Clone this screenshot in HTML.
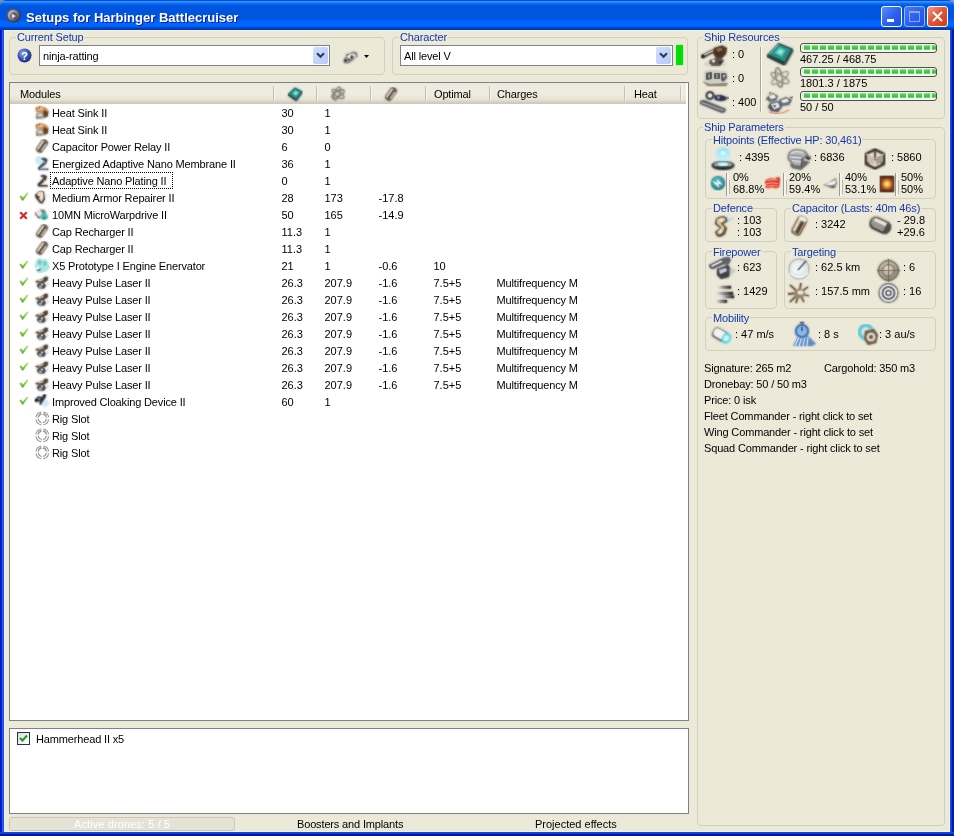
<!DOCTYPE html><html><head><meta charset="utf-8"><style>
*{margin:0;padding:0;box-sizing:border-box}
html,body{width:954px;height:836px;overflow:hidden;background:#0831D9}
body{position:relative;font-family:"Liberation Sans",sans-serif;font-size:11px;color:#000}
.a{position:absolute}
.t{position:absolute;white-space:nowrap;line-height:13px;letter-spacing:-0.15px}
#title{left:0;top:0;width:954px;height:30px;border-radius:6px 6px 0 0;background:linear-gradient(#0050D0 0px,#0050D0 1px,#3A93FF 1px,#2E8CFF 2px,#1277FA 3px,#0668F0 4px,#015EE5 5px,#0055DE 6px,#0055E0 19px,#005EF2 20px,#0066FF 22px,#0066FF 26px,#0058EC 27px,#0040C0 28px,#0036B0 30px)}
#body{left:4px;top:30px;width:946px;height:802px;background:#ECE9D8}
.gb{position:absolute;border:1px solid #D0D0BF;border-radius:4px}
.cap{position:absolute;white-space:nowrap;line-height:13px;color:#1438B0;background:#ECE9D8;padding:0 1px;letter-spacing:-0.15px}
.combo{position:absolute;background:#fff;border:1px solid #788390}
.ddb{position:absolute;border-radius:2px;background:linear-gradient(135deg,#D2DEFC,#C0D2FA 60%,#B8CCF8)}
.list{position:absolute;background:#fff;border:1px solid #788390}
.hdr{position:absolute;height:21px;background:linear-gradient(#EBEADB 0,#EEEDE2 50%,#E5E3D3 80%,#D6D2C2 90%,#CBC7B8 100%)}
.sep{position:absolute;width:1px;height:15px;background:#C4C1B0;box-shadow:1px 0 0 #F4F3EC}
.tb{position:absolute;width:21px;height:21px;border:1px solid #fff;border-radius:3px}
</style></head><body><div id="root" style="position:absolute;left:0;top:0;width:954px;height:836px;overflow:hidden;will-change:transform">
<svg width="0" height="0" style="position:absolute"><defs><filter id="bl" x="-20%" y="-20%" width="140%" height="140%"><feGaussianBlur in="SourceGraphic" stdDeviation="0.8" result="b"/><feComponentTransfer in="SourceGraphic" result="s"><feFuncA type="linear" slope="0.55"/></feComponentTransfer><feMerge><feMergeNode in="b"/><feMergeNode in="s"/></feMerge></filter></defs></svg>
<div class="a" style="left:0;top:0;width:8px;height:8px;background:#7E8A9E"></div><div class="a" style="left:946px;top:0;width:8px;height:8px;background:#8494B4"></div>
<div id="title" class="a"></div>
<div class="a" style="left:0;top:30px;width:4px;height:806px;background:linear-gradient(90deg,#0019C8 0,#0019C8 2px,#2A62FF 2px,#2A62FF 3px,#1C50D8 3px)"></div>
<div class="a" style="left:950px;top:30px;width:4px;height:806px;background:linear-gradient(90deg,#2050D8 0,#2050D8 1px,#0A3CE0 1px,#0A3CE0 2px,#0018A0 2px)"></div>
<div class="a" style="left:0;top:832px;width:954px;height:4px;background:linear-gradient(#1848D0 0,#1848D0 1px,#0840E0 1px,#0840E0 2px,#0018A0 2px)"></div>
<div id="body" class="a"></div>
<div class="a" style="left:4px;top:30px;width:946px;height:1px;background:#F6F6F0"></div>
<div class="a" style="left:4px;top:30px;width:1px;height:802px;background:#EEF2FC"></div>
<div class="a" style="left:949px;top:30px;width:1px;height:802px;background:#F2F4FC"></div>
<div class="a" style="left:4px;top:831px;width:946px;height:1px;background:#F2F4FC"></div>
<svg class="a" style="left:6px;top:8px" width="15" height="15" viewBox="0 0 15 15"><defs><linearGradient id="ti" x1="0" y1="0" x2="1" y2="1"><stop offset="0" stop-color="#f0e8e0"/><stop offset="0.5" stop-color="#9a8a80"/><stop offset="1" stop-color="#3a3030"/></linearGradient></defs><g filter="url(#bl)"><circle cx="7.5" cy="7.5" r="6.8" fill="#2a2630"/><circle cx="7.5" cy="7.5" r="5.8" fill="url(#ti)"/><circle cx="7.5" cy="7.8" r="3.2" fill="#1c3070"/><path d="M5.5 5.5 L10 8 L6 10.5Z" fill="#f4f4ff"/></g></svg>
<div class="t" style="left:26px;top:11px;font-size:13px;font-weight:bold;color:#fff;letter-spacing:0;text-shadow:1px 1px 0 #0A1E99">Setups for Harbinger Battlecruiser</div>
<div class="tb" style="left:881px;top:6px;background:linear-gradient(135deg,#5B8CF9,#2C62F0 50%,#1E4FE0)"><div class="a" style="left:5px;top:12px;width:7px;height:3px;background:#fff"></div></div>
<div class="tb" style="left:904px;top:6px;border-color:#9DB5F5;background:linear-gradient(135deg,#4B7CF5,#2C62F0 50%,#1E4FE0)"><div class="a" style="left:4px;top:4px;width:11px;height:11px;border:1px solid #8AA8F0;border-top-width:2px"></div></div>
<div class="tb" style="left:927px;top:6px;background:linear-gradient(135deg,#F09A80,#E2583A 45%,#CC3C1A)"><svg class="a" style="left:3px;top:3px" width="13" height="13"><path d="M2 2L11 11M11 2L2 11" stroke="#fff" stroke-width="2"/></svg></div>
<div class="gb" style="left:9px;top:37px;width:376px;height:38px"></div>
<div class="cap" style="left:16px;top:31px">Current Setup</div>
<svg class="a" style="left:17px;top:48px" width="15" height="15" viewBox="0 0 15 15"><defs><radialGradient id="hq" cx="40%" cy="35%" r="65%"><stop offset="0" stop-color="#9fb4f0"/><stop offset="0.6" stop-color="#3553b8"/><stop offset="1" stop-color="#1d2f80"/></radialGradient></defs><circle cx="7.5" cy="7.5" r="7" fill="url(#hq)"/><text x="7.5" y="11.5" font-size="11" font-weight="bold" text-anchor="middle" fill="#fff" font-family="Liberation Sans">?</text></svg>
<div class="combo" style="left:39px;top:45px;width:291px;height:21px"></div>
<div class="ddb" style="left:313px;top:47px;width:15px;height:17px"><svg class="a" style="left:3px;top:5px" width="9" height="7"><path d="M1 1.3L4.5 4.8L8 1.3" stroke="#2C3A5E" stroke-width="2.2" fill="none"/></svg></div>
<div class="t" style="left:43px;top:50px;">ninja-ratting</div>
<svg class="a" style="left:342px;top:49px" width="18" height="16" viewBox="0 0 18 16"><g filter="url(#bl)"><path d="M1.5 11 L5 6 L9 3.5 L12 2.5 L14.5 4 L16 7 L13 9 L10 12 L6 14.5 L2 14Z" fill="#8a8a84"/><path d="M5 7 L9 5 L12 5 L14 7 L11 9 L7 10Z" fill="#f4f6f8"/><path d="M9 6 L12 7 L10 10 L8 9Z" fill="#1a2028"/><circle cx="3.5" cy="11.5" r="1.2" fill="#101010"/><circle cx="7" cy="10.5" r="1" fill="#303030"/><path d="M4 6 L7 5.5" stroke="#404040" stroke-width="1"/><path d="M13 5 L15 3.5" stroke="#606060" stroke-width="1"/></g></svg>
<svg class="a" style="left:364px;top:55px" width="6" height="4" viewBox="0 0 6 4"><path d="M0 0H5L2.5 3Z" fill="#000"/></svg>
<div class="gb" style="left:392px;top:37px;width:296px;height:38px"></div>
<div class="cap" style="left:399px;top:31px">Character</div>
<div class="combo" style="left:400px;top:45px;width:273px;height:21px"></div>
<div class="ddb" style="left:656px;top:47px;width:15px;height:17px"><svg class="a" style="left:3px;top:5px" width="9" height="7"><path d="M1 1.3L4.5 4.8L8 1.3" stroke="#2C3A5E" stroke-width="2.2" fill="none"/></svg></div>
<div class="t" style="left:404px;top:50px;">All level V</div>
<div class="a" style="left:676px;top:45px;width:7px;height:20px;background:#00E000;box-shadow:0 0 1px #8f8"></div>
<div class="list" style="left:9px;top:82px;width:680px;height:639px"></div>
<div class="hdr" style="left:10px;top:83px;width:676px"></div>
<div class="sep" style="left:273px;top:86px"></div>
<div class="sep" style="left:316px;top:86px"></div>
<div class="sep" style="left:370px;top:86px"></div>
<div class="sep" style="left:425px;top:86px"></div>
<div class="sep" style="left:489px;top:86px"></div>
<div class="sep" style="left:624px;top:86px"></div>
<div class="sep" style="left:680px;top:86px"></div>
<div class="t" style="left:20px;top:88px;">Modules</div>
<div class="t" style="left:434px;top:88px;">Optimal</div>
<div class="t" style="left:497px;top:88px;">Charges</div>
<div class="t" style="left:634px;top:88px;">Heat</div>
<svg class="a" style="left:287px;top:86px" width="16" height="16" viewBox="0 0 16 16"><g filter="url(#bl)"><path d="M1 8 L8 1.5 L15.5 5.5 L9.5 14Z" fill="#1e5a58"/><path d="M3 8 L8 3 L13.5 6 L9 12Z" fill="#2e9a90"/><path d="M6 7.5 L8.5 5 L11.5 6.5 L9 9.5Z" fill="#80e8d8"/><path d="M1 8 L9.5 14 L9.5 15.5 L1 9.5Z" fill="#203030"/><path d="M9.5 14 L15.5 5.5 L15.5 7 L9.5 15.5Z" fill="#3a4c4c"/></g></svg>
<svg class="a" style="left:330px;top:86px" width="16" height="16" viewBox="0 0 16 16"><g filter="url(#bl)" fill="none" stroke="#7a766c" stroke-width="1.1"><ellipse cx="8" cy="8" rx="7" ry="2.6" transform="rotate(35 8 8)"/><ellipse cx="8" cy="8" rx="7" ry="2.6" transform="rotate(-30 8 8)"/><ellipse cx="7" cy="7.5" rx="2.4" ry="7" transform="rotate(20 7 7.5)"/></g></svg>
<svg class="a" style="left:383px;top:87px" width="16" height="16" viewBox="0 0 16 16"><g filter="url(#bl)" transform="rotate(35 8 7)"><rect x="4.5" y="0" width="7" height="14" rx="3" fill="#3a3028"/><rect x="5.5" y="1" width="5" height="12" rx="2" fill="#a89478"/><rect x="7.3" y="1.5" width="2" height="11" fill="#2a1e12"/><rect x="5.6" y="2" width="1.3" height="10" fill="#f4ece0"/><rect x="9.6" y="3" width="1" height="8" fill="#e8e0d0"/></g></svg>
<svg class="a" style="left:34px;top:105px" width="16" height="16" viewBox="0 0 16 16"><g filter="url(#bl)"><path d="M1.5 3.5 Q4 0.5 8 1.5 L12 3 L15 6.5 L14 9 L9 8 L2.5 7Z" fill="#c78a50"/><path d="M3 3 Q5 1.5 8 2.5 L10 4 L7 5.5 L3.5 5Z" fill="#ecc08a"/><path d="M2.5 3 L3.5 4 M5 2 L6 3.5" stroke="#5a3a20" stroke-width="1.2"/><path d="M10 5 L14 7 L14 11 L10 13 L9 8Z" fill="#5e3e22"/><path d="M2.5 8 L9 8 L10 13 L7 14 L2 13Z" fill="#a09a90"/><path d="M4 9 L8 9 L8 11 L4.5 11Z" fill="#e0dcd6"/><path d="M2 12 L5 13.5 L3 13.8Z" fill="#3a3a38"/></g></svg>
<div class="t" style="left:52px;top:107px;">Heat Sink II</div>
<div class="t" style="left:281.5px;top:107px;letter-spacing:0;">30</div>
<div class="t" style="left:324.5px;top:107px;letter-spacing:0;">1</div>
<svg class="a" style="left:34px;top:122px" width="16" height="16" viewBox="0 0 16 16"><g filter="url(#bl)"><path d="M1.5 3.5 Q4 0.5 8 1.5 L12 3 L15 6.5 L14 9 L9 8 L2.5 7Z" fill="#c78a50"/><path d="M3 3 Q5 1.5 8 2.5 L10 4 L7 5.5 L3.5 5Z" fill="#ecc08a"/><path d="M2.5 3 L3.5 4 M5 2 L6 3.5" stroke="#5a3a20" stroke-width="1.2"/><path d="M10 5 L14 7 L14 11 L10 13 L9 8Z" fill="#5e3e22"/><path d="M2.5 8 L9 8 L10 13 L7 14 L2 13Z" fill="#a09a90"/><path d="M4 9 L8 9 L8 11 L4.5 11Z" fill="#e0dcd6"/><path d="M2 12 L5 13.5 L3 13.8Z" fill="#3a3a38"/></g></svg>
<div class="t" style="left:52px;top:124px;">Heat Sink II</div>
<div class="t" style="left:281.5px;top:124px;letter-spacing:0;">30</div>
<div class="t" style="left:324.5px;top:124px;letter-spacing:0;">1</div>
<svg class="a" style="left:34px;top:139px" width="16" height="16" viewBox="0 0 16 16"><g filter="url(#bl)" transform="rotate(35 8 7)"><rect x="4.5" y="0" width="7" height="14" rx="3" fill="#3a3028"/><rect x="5.5" y="1" width="5" height="12" rx="2" fill="#a89478"/><rect x="7.3" y="1.5" width="2" height="11" fill="#2a1e12"/><rect x="5.6" y="2" width="1.3" height="10" fill="#f4ece0"/><rect x="9.6" y="3" width="1" height="8" fill="#e8e0d0"/></g></svg>
<div class="t" style="left:52px;top:141px;">Capacitor Power Relay II</div>
<div class="t" style="left:281.5px;top:141px;letter-spacing:0;">6</div>
<div class="t" style="left:324.5px;top:141px;letter-spacing:0;">0</div>
<svg class="a" style="left:34px;top:156px" width="16" height="16" viewBox="0 0 16 16"><g filter="url(#bl)"><ellipse cx="5" cy="4" rx="3.5" ry="4" fill="#cfe6f4"/><path d="M7 2.5 Q10 0.8 13.5 3.5 L12 8 L7.5 11 L6 12.5 L14 12.5 L14.5 14 L5 14 L4 12 L9 6.5 L11 4.5 L8 4Z" fill="#2e4050"/><path d="M9 7 L11.5 5 L11 8Z" fill="#8aa0b4"/><path d="M6 13 L13 13" stroke="#a8b8c4" stroke-width="0.8"/></g></svg>
<div class="t" style="left:52px;top:158px;">Energized Adaptive Nano Membrane II</div>
<div class="t" style="left:281.5px;top:158px;letter-spacing:0;">36</div>
<div class="t" style="left:324.5px;top:158px;letter-spacing:0;">1</div>
<svg class="a" style="left:34px;top:173px" width="16" height="16" viewBox="0 0 16 16"><g filter="url(#bl)"><path d="M6.5 3 Q9 0.8 13 3.5 L11.5 7.5 L7.5 10.5 L6 12 L13.5 12 L14 13.5 L4.5 13.5 L3.5 11.5 L8.5 6 L10.5 4.5 L7.5 4Z" fill="#3a2e22"/><path d="M6 5 L8 5.5 L5.5 8Z" fill="#f0e4d8"/><path d="M9 8 L11 6.5 L10.5 9Z" fill="#b8aca0"/></g></svg>
<div class="t" style="left:52px;top:175px;">Adaptive Nano Plating II</div>
<div class="t" style="left:281.5px;top:175px;letter-spacing:0;">0</div>
<div class="t" style="left:324.5px;top:175px;letter-spacing:0;">1</div>
<svg class="a" style="left:19px;top:192px" width="10" height="9" viewBox="0 0 10 9"><defs><linearGradient id="ck" x1="0" y1="0" x2="0" y2="1"><stop offset="0" stop-color="#c4ec7c"/><stop offset="1" stop-color="#52ac2c"/></linearGradient></defs><path d="M0.3 4.6 L2.2 3.3 L3.8 5.5 L8.2 0.2 L9.6 1.3 L4 8.8 L3.3 8.8Z" fill="url(#ck)"/></svg>
<svg class="a" style="left:34px;top:190px" width="16" height="16" viewBox="0 0 16 16"><g filter="url(#bl)"><path d="M4 2 Q7 -0.5 10 2 L11 9 L8.5 13.5 L6 13 L2 8 L1 5Z" fill="#3e3224"/><path d="M4.5 2 Q7 0.5 9 2.5 L9.5 8 L7.5 12 L4 7 L3 4Z" fill="#e8d4b8"/><path d="M1.5 5.5 L5 6 L6 8 L2.5 8Z" fill="#2e241a"/><path d="M7 3 L8.5 3 L8 9 L7 10Z" fill="#fff2e0"/><path d="M11 4 L14 5.5 L12 8Z" fill="#d8f0f0" opacity="0.7"/></g></svg>
<div class="t" style="left:52px;top:192px;">Medium Armor Repairer II</div>
<div class="t" style="left:281.5px;top:192px;letter-spacing:0;">28</div>
<div class="t" style="left:324.5px;top:192px;letter-spacing:0;">173</div>
<div class="t" style="left:378.5px;top:192px;letter-spacing:0;">-17.8</div>
<svg class="a" style="left:19px;top:211px" width="9" height="9" viewBox="0 0 9 9"><path d="M1.2 1.2 L7.8 7.8 M7.8 1.2 L1.2 7.8" stroke="#d42a2a" stroke-width="2.2"/></svg>
<svg class="a" style="left:34px;top:207px" width="16" height="16" viewBox="0 0 16 16"><g filter="url(#bl)"><path d="M1.5 5 L6 2 L11 3 L13.5 7 L14 11 L8 12.5 L3 8Z" fill="#e8e4e4"/><path d="M1.5 5 L3 8 L7 11 L5 11.5 L1 7Z" fill="#6a2e30"/><path d="M6 2.5 L10.5 3 L12 6 L8 6Z" fill="#7a7276"/><path d="M8 6 L12 6 L14 10 L13 12 L8 12.5 L6 10Z" fill="#38c0b0"/><path d="M9 10 L13 11 L9 12.5Z" fill="#1a6a60"/></g></svg>
<div class="t" style="left:52px;top:209px;">10MN MicroWarpdrive II</div>
<div class="t" style="left:281.5px;top:209px;letter-spacing:0;">50</div>
<div class="t" style="left:324.5px;top:209px;letter-spacing:0;">165</div>
<div class="t" style="left:378.5px;top:209px;letter-spacing:0;">-14.9</div>
<svg class="a" style="left:34px;top:224px" width="16" height="16" viewBox="0 0 16 16"><g filter="url(#bl)" transform="rotate(35 8 7)"><rect x="4.5" y="0" width="7" height="14" rx="3" fill="#3a3028"/><rect x="5.5" y="1" width="5" height="12" rx="2" fill="#a89478"/><rect x="7.3" y="1.5" width="2" height="11" fill="#2a1e12"/><rect x="5.6" y="2" width="1.3" height="10" fill="#f4ece0"/><rect x="9.6" y="3" width="1" height="8" fill="#e8e0d0"/></g></svg>
<div class="t" style="left:52px;top:226px;">Cap Recharger II</div>
<div class="t" style="left:281.5px;top:226px;letter-spacing:0;">11.3</div>
<div class="t" style="left:324.5px;top:226px;letter-spacing:0;">1</div>
<svg class="a" style="left:34px;top:241px" width="16" height="16" viewBox="0 0 16 16"><g filter="url(#bl)" transform="rotate(35 8 7)"><rect x="4.5" y="0" width="7" height="14" rx="3" fill="#3a3028"/><rect x="5.5" y="1" width="5" height="12" rx="2" fill="#a89478"/><rect x="7.3" y="1.5" width="2" height="11" fill="#2a1e12"/><rect x="5.6" y="2" width="1.3" height="10" fill="#f4ece0"/><rect x="9.6" y="3" width="1" height="8" fill="#e8e0d0"/></g></svg>
<div class="t" style="left:52px;top:243px;">Cap Recharger II</div>
<div class="t" style="left:281.5px;top:243px;letter-spacing:0;">11.3</div>
<div class="t" style="left:324.5px;top:243px;letter-spacing:0;">1</div>
<svg class="a" style="left:19px;top:260px" width="10" height="9" viewBox="0 0 10 9"><defs><linearGradient id="ck" x1="0" y1="0" x2="0" y2="1"><stop offset="0" stop-color="#c4ec7c"/><stop offset="1" stop-color="#52ac2c"/></linearGradient></defs><path d="M0.3 4.6 L2.2 3.3 L3.8 5.5 L8.2 0.2 L9.6 1.3 L4 8.8 L3.3 8.8Z" fill="url(#ck)"/></svg>
<svg class="a" style="left:34px;top:258px" width="16" height="16" viewBox="0 0 16 16"><g filter="url(#bl)"><path d="M2 3 L5 0 L9 2 L12 1 L14 5 L16 9 L13 13 L7 15 L3 14 L1 9Z" fill="#a8e6e0"/><path d="M4 2 L8 3 L7 7 L4 6Z M9 4 L12 3 L13 7 L10 8Z" fill="#6cc8c0"/><path d="M3 9 L7 10 L7 13 L3 13Z" fill="#5cb8b0"/><path d="M3 10 L6 10.5 L5.5 13 L3.5 12.5Z" fill="#1a2020"/><rect x="2.5" y="9" width="3" height="2.5" fill="#fff"/></g></svg>
<div class="t" style="left:52px;top:260px;">X5 Prototype I Engine Enervator</div>
<div class="t" style="left:281.5px;top:260px;letter-spacing:0;">21</div>
<div class="t" style="left:324.5px;top:260px;letter-spacing:0;">1</div>
<div class="t" style="left:378.5px;top:260px;letter-spacing:0;">-0.6</div>
<div class="t" style="left:433.5px;top:260px;letter-spacing:0;">10</div>
<svg class="a" style="left:19px;top:277px" width="10" height="9" viewBox="0 0 10 9"><defs><linearGradient id="ck" x1="0" y1="0" x2="0" y2="1"><stop offset="0" stop-color="#c4ec7c"/><stop offset="1" stop-color="#52ac2c"/></linearGradient></defs><path d="M0.3 4.6 L2.2 3.3 L3.8 5.5 L8.2 0.2 L9.6 1.3 L4 8.8 L3.3 8.8Z" fill="url(#ck)"/></svg>
<svg class="a" style="left:34px;top:275px" width="16" height="16" viewBox="0 0 16 16"><g filter="url(#bl)"><path d="M1 6.5 L8 4 L12 1.5 L14 2.5 L13.5 5.5 L9 8 L3 7.5Z" fill="#4a3828"/><path d="M4 5.5 L9 4 L10 5 L5 6.5Z" fill="#d8c8b8"/><path d="M4 8.5 L10 8 L12 11 L10 13.5 L5 13.5 L3 11Z" fill="#3a3c40"/><path d="M5 11 L8 10.5 L7.5 12.5 L5.5 13Z" fill="#b8bcc4"/><circle cx="8" cy="9.5" r="0.9" fill="#f4f4f4"/><path d="M12 8 L15 9 L13 12Z" fill="#d0d0d0" opacity="0.7"/></g></svg>
<div class="t" style="left:52px;top:277px;">Heavy Pulse Laser II</div>
<div class="t" style="left:281.5px;top:277px;letter-spacing:0;">26.3</div>
<div class="t" style="left:324.5px;top:277px;letter-spacing:0;">207.9</div>
<div class="t" style="left:378.5px;top:277px;letter-spacing:0;">-1.6</div>
<div class="t" style="left:433.5px;top:277px;letter-spacing:0;">7.5+5</div>
<div class="t" style="left:496.5px;top:277px;">Multifrequency M</div>
<svg class="a" style="left:19px;top:294px" width="10" height="9" viewBox="0 0 10 9"><defs><linearGradient id="ck" x1="0" y1="0" x2="0" y2="1"><stop offset="0" stop-color="#c4ec7c"/><stop offset="1" stop-color="#52ac2c"/></linearGradient></defs><path d="M0.3 4.6 L2.2 3.3 L3.8 5.5 L8.2 0.2 L9.6 1.3 L4 8.8 L3.3 8.8Z" fill="url(#ck)"/></svg>
<svg class="a" style="left:34px;top:292px" width="16" height="16" viewBox="0 0 16 16"><g filter="url(#bl)"><path d="M1 6.5 L8 4 L12 1.5 L14 2.5 L13.5 5.5 L9 8 L3 7.5Z" fill="#4a3828"/><path d="M4 5.5 L9 4 L10 5 L5 6.5Z" fill="#d8c8b8"/><path d="M4 8.5 L10 8 L12 11 L10 13.5 L5 13.5 L3 11Z" fill="#3a3c40"/><path d="M5 11 L8 10.5 L7.5 12.5 L5.5 13Z" fill="#b8bcc4"/><circle cx="8" cy="9.5" r="0.9" fill="#f4f4f4"/><path d="M12 8 L15 9 L13 12Z" fill="#d0d0d0" opacity="0.7"/></g></svg>
<div class="t" style="left:52px;top:294px;">Heavy Pulse Laser II</div>
<div class="t" style="left:281.5px;top:294px;letter-spacing:0;">26.3</div>
<div class="t" style="left:324.5px;top:294px;letter-spacing:0;">207.9</div>
<div class="t" style="left:378.5px;top:294px;letter-spacing:0;">-1.6</div>
<div class="t" style="left:433.5px;top:294px;letter-spacing:0;">7.5+5</div>
<div class="t" style="left:496.5px;top:294px;">Multifrequency M</div>
<svg class="a" style="left:19px;top:311px" width="10" height="9" viewBox="0 0 10 9"><defs><linearGradient id="ck" x1="0" y1="0" x2="0" y2="1"><stop offset="0" stop-color="#c4ec7c"/><stop offset="1" stop-color="#52ac2c"/></linearGradient></defs><path d="M0.3 4.6 L2.2 3.3 L3.8 5.5 L8.2 0.2 L9.6 1.3 L4 8.8 L3.3 8.8Z" fill="url(#ck)"/></svg>
<svg class="a" style="left:34px;top:309px" width="16" height="16" viewBox="0 0 16 16"><g filter="url(#bl)"><path d="M1 6.5 L8 4 L12 1.5 L14 2.5 L13.5 5.5 L9 8 L3 7.5Z" fill="#4a3828"/><path d="M4 5.5 L9 4 L10 5 L5 6.5Z" fill="#d8c8b8"/><path d="M4 8.5 L10 8 L12 11 L10 13.5 L5 13.5 L3 11Z" fill="#3a3c40"/><path d="M5 11 L8 10.5 L7.5 12.5 L5.5 13Z" fill="#b8bcc4"/><circle cx="8" cy="9.5" r="0.9" fill="#f4f4f4"/><path d="M12 8 L15 9 L13 12Z" fill="#d0d0d0" opacity="0.7"/></g></svg>
<div class="t" style="left:52px;top:311px;">Heavy Pulse Laser II</div>
<div class="t" style="left:281.5px;top:311px;letter-spacing:0;">26.3</div>
<div class="t" style="left:324.5px;top:311px;letter-spacing:0;">207.9</div>
<div class="t" style="left:378.5px;top:311px;letter-spacing:0;">-1.6</div>
<div class="t" style="left:433.5px;top:311px;letter-spacing:0;">7.5+5</div>
<div class="t" style="left:496.5px;top:311px;">Multifrequency M</div>
<svg class="a" style="left:19px;top:328px" width="10" height="9" viewBox="0 0 10 9"><defs><linearGradient id="ck" x1="0" y1="0" x2="0" y2="1"><stop offset="0" stop-color="#c4ec7c"/><stop offset="1" stop-color="#52ac2c"/></linearGradient></defs><path d="M0.3 4.6 L2.2 3.3 L3.8 5.5 L8.2 0.2 L9.6 1.3 L4 8.8 L3.3 8.8Z" fill="url(#ck)"/></svg>
<svg class="a" style="left:34px;top:326px" width="16" height="16" viewBox="0 0 16 16"><g filter="url(#bl)"><path d="M1 6.5 L8 4 L12 1.5 L14 2.5 L13.5 5.5 L9 8 L3 7.5Z" fill="#4a3828"/><path d="M4 5.5 L9 4 L10 5 L5 6.5Z" fill="#d8c8b8"/><path d="M4 8.5 L10 8 L12 11 L10 13.5 L5 13.5 L3 11Z" fill="#3a3c40"/><path d="M5 11 L8 10.5 L7.5 12.5 L5.5 13Z" fill="#b8bcc4"/><circle cx="8" cy="9.5" r="0.9" fill="#f4f4f4"/><path d="M12 8 L15 9 L13 12Z" fill="#d0d0d0" opacity="0.7"/></g></svg>
<div class="t" style="left:52px;top:328px;">Heavy Pulse Laser II</div>
<div class="t" style="left:281.5px;top:328px;letter-spacing:0;">26.3</div>
<div class="t" style="left:324.5px;top:328px;letter-spacing:0;">207.9</div>
<div class="t" style="left:378.5px;top:328px;letter-spacing:0;">-1.6</div>
<div class="t" style="left:433.5px;top:328px;letter-spacing:0;">7.5+5</div>
<div class="t" style="left:496.5px;top:328px;">Multifrequency M</div>
<svg class="a" style="left:19px;top:345px" width="10" height="9" viewBox="0 0 10 9"><defs><linearGradient id="ck" x1="0" y1="0" x2="0" y2="1"><stop offset="0" stop-color="#c4ec7c"/><stop offset="1" stop-color="#52ac2c"/></linearGradient></defs><path d="M0.3 4.6 L2.2 3.3 L3.8 5.5 L8.2 0.2 L9.6 1.3 L4 8.8 L3.3 8.8Z" fill="url(#ck)"/></svg>
<svg class="a" style="left:34px;top:343px" width="16" height="16" viewBox="0 0 16 16"><g filter="url(#bl)"><path d="M1 6.5 L8 4 L12 1.5 L14 2.5 L13.5 5.5 L9 8 L3 7.5Z" fill="#4a3828"/><path d="M4 5.5 L9 4 L10 5 L5 6.5Z" fill="#d8c8b8"/><path d="M4 8.5 L10 8 L12 11 L10 13.5 L5 13.5 L3 11Z" fill="#3a3c40"/><path d="M5 11 L8 10.5 L7.5 12.5 L5.5 13Z" fill="#b8bcc4"/><circle cx="8" cy="9.5" r="0.9" fill="#f4f4f4"/><path d="M12 8 L15 9 L13 12Z" fill="#d0d0d0" opacity="0.7"/></g></svg>
<div class="t" style="left:52px;top:345px;">Heavy Pulse Laser II</div>
<div class="t" style="left:281.5px;top:345px;letter-spacing:0;">26.3</div>
<div class="t" style="left:324.5px;top:345px;letter-spacing:0;">207.9</div>
<div class="t" style="left:378.5px;top:345px;letter-spacing:0;">-1.6</div>
<div class="t" style="left:433.5px;top:345px;letter-spacing:0;">7.5+5</div>
<div class="t" style="left:496.5px;top:345px;">Multifrequency M</div>
<svg class="a" style="left:19px;top:362px" width="10" height="9" viewBox="0 0 10 9"><defs><linearGradient id="ck" x1="0" y1="0" x2="0" y2="1"><stop offset="0" stop-color="#c4ec7c"/><stop offset="1" stop-color="#52ac2c"/></linearGradient></defs><path d="M0.3 4.6 L2.2 3.3 L3.8 5.5 L8.2 0.2 L9.6 1.3 L4 8.8 L3.3 8.8Z" fill="url(#ck)"/></svg>
<svg class="a" style="left:34px;top:360px" width="16" height="16" viewBox="0 0 16 16"><g filter="url(#bl)"><path d="M1 6.5 L8 4 L12 1.5 L14 2.5 L13.5 5.5 L9 8 L3 7.5Z" fill="#4a3828"/><path d="M4 5.5 L9 4 L10 5 L5 6.5Z" fill="#d8c8b8"/><path d="M4 8.5 L10 8 L12 11 L10 13.5 L5 13.5 L3 11Z" fill="#3a3c40"/><path d="M5 11 L8 10.5 L7.5 12.5 L5.5 13Z" fill="#b8bcc4"/><circle cx="8" cy="9.5" r="0.9" fill="#f4f4f4"/><path d="M12 8 L15 9 L13 12Z" fill="#d0d0d0" opacity="0.7"/></g></svg>
<div class="t" style="left:52px;top:362px;">Heavy Pulse Laser II</div>
<div class="t" style="left:281.5px;top:362px;letter-spacing:0;">26.3</div>
<div class="t" style="left:324.5px;top:362px;letter-spacing:0;">207.9</div>
<div class="t" style="left:378.5px;top:362px;letter-spacing:0;">-1.6</div>
<div class="t" style="left:433.5px;top:362px;letter-spacing:0;">7.5+5</div>
<div class="t" style="left:496.5px;top:362px;">Multifrequency M</div>
<svg class="a" style="left:19px;top:379px" width="10" height="9" viewBox="0 0 10 9"><defs><linearGradient id="ck" x1="0" y1="0" x2="0" y2="1"><stop offset="0" stop-color="#c4ec7c"/><stop offset="1" stop-color="#52ac2c"/></linearGradient></defs><path d="M0.3 4.6 L2.2 3.3 L3.8 5.5 L8.2 0.2 L9.6 1.3 L4 8.8 L3.3 8.8Z" fill="url(#ck)"/></svg>
<svg class="a" style="left:34px;top:377px" width="16" height="16" viewBox="0 0 16 16"><g filter="url(#bl)"><path d="M1 6.5 L8 4 L12 1.5 L14 2.5 L13.5 5.5 L9 8 L3 7.5Z" fill="#4a3828"/><path d="M4 5.5 L9 4 L10 5 L5 6.5Z" fill="#d8c8b8"/><path d="M4 8.5 L10 8 L12 11 L10 13.5 L5 13.5 L3 11Z" fill="#3a3c40"/><path d="M5 11 L8 10.5 L7.5 12.5 L5.5 13Z" fill="#b8bcc4"/><circle cx="8" cy="9.5" r="0.9" fill="#f4f4f4"/><path d="M12 8 L15 9 L13 12Z" fill="#d0d0d0" opacity="0.7"/></g></svg>
<div class="t" style="left:52px;top:379px;">Heavy Pulse Laser II</div>
<div class="t" style="left:281.5px;top:379px;letter-spacing:0;">26.3</div>
<div class="t" style="left:324.5px;top:379px;letter-spacing:0;">207.9</div>
<div class="t" style="left:378.5px;top:379px;letter-spacing:0;">-1.6</div>
<div class="t" style="left:433.5px;top:379px;letter-spacing:0;">7.5+5</div>
<div class="t" style="left:496.5px;top:379px;">Multifrequency M</div>
<svg class="a" style="left:19px;top:396px" width="10" height="9" viewBox="0 0 10 9"><defs><linearGradient id="ck" x1="0" y1="0" x2="0" y2="1"><stop offset="0" stop-color="#c4ec7c"/><stop offset="1" stop-color="#52ac2c"/></linearGradient></defs><path d="M0.3 4.6 L2.2 3.3 L3.8 5.5 L8.2 0.2 L9.6 1.3 L4 8.8 L3.3 8.8Z" fill="url(#ck)"/></svg>
<svg class="a" style="left:34px;top:394px" width="16" height="16" viewBox="0 0 16 16"><g filter="url(#bl)"><path d="M1 6 L4 2.5 L8 3 L10.5 0.5 L12 2 L10 6 L7 11 L5.5 10 L6 7 L2.5 8Z" fill="#2a3038"/><path d="M4 4 L7 4.5 L5 6Z" fill="#9aa8b8"/><circle cx="2" cy="6.5" r="1.2" fill="#0e1014"/><circle cx="10.5" cy="1.5" r="1.2" fill="#0e1014"/><path d="M8 8 L14 6 L15 11 L10 14Z" fill="#c4e0f4" opacity="0.6"/></g></svg>
<div class="t" style="left:52px;top:396px;">Improved Cloaking Device II</div>
<div class="t" style="left:281.5px;top:396px;letter-spacing:0;">60</div>
<div class="t" style="left:324.5px;top:396px;letter-spacing:0;">1</div>
<svg class="a" style="left:35px;top:411px" width="15" height="15" viewBox="0 0 15 15"><g fill="none"><path d="M2.07 6.47 A5.3 5.3 0 0 1 6.47 2.07 M8.13 2.07 A5.3 5.3 0 0 1 12.53 6.47 M12.53 8.13 A5.3 5.3 0 0 1 8.13 12.53 M6.47 12.53 A5.3 5.3 0 0 1 2.07 8.13" stroke="#969696" stroke-width="3.3"/><path d="M2.07 6.47 A5.3 5.3 0 0 1 6.47 2.07 M8.13 2.07 A5.3 5.3 0 0 1 12.53 6.47 M12.53 8.13 A5.3 5.3 0 0 1 8.13 12.53 M6.47 12.53 A5.3 5.3 0 0 1 2.07 8.13" stroke="#fcfcfc" stroke-width="1.3"/><path d="M3 4.6 A5.2 5.2 0 0 1 6 2.4 M8.6 2.4 A5.2 5.2 0 0 1 11.6 4.6" stroke="#6a6a6a" stroke-width="1" opacity="0.7"/></g></svg>
<div class="t" style="left:52px;top:413px;">Rig Slot</div>
<svg class="a" style="left:35px;top:428px" width="15" height="15" viewBox="0 0 15 15"><g fill="none"><path d="M2.07 6.47 A5.3 5.3 0 0 1 6.47 2.07 M8.13 2.07 A5.3 5.3 0 0 1 12.53 6.47 M12.53 8.13 A5.3 5.3 0 0 1 8.13 12.53 M6.47 12.53 A5.3 5.3 0 0 1 2.07 8.13" stroke="#969696" stroke-width="3.3"/><path d="M2.07 6.47 A5.3 5.3 0 0 1 6.47 2.07 M8.13 2.07 A5.3 5.3 0 0 1 12.53 6.47 M12.53 8.13 A5.3 5.3 0 0 1 8.13 12.53 M6.47 12.53 A5.3 5.3 0 0 1 2.07 8.13" stroke="#fcfcfc" stroke-width="1.3"/><path d="M3 4.6 A5.2 5.2 0 0 1 6 2.4 M8.6 2.4 A5.2 5.2 0 0 1 11.6 4.6" stroke="#6a6a6a" stroke-width="1" opacity="0.7"/></g></svg>
<div class="t" style="left:52px;top:430px;">Rig Slot</div>
<svg class="a" style="left:35px;top:445px" width="15" height="15" viewBox="0 0 15 15"><g fill="none"><path d="M2.07 6.47 A5.3 5.3 0 0 1 6.47 2.07 M8.13 2.07 A5.3 5.3 0 0 1 12.53 6.47 M12.53 8.13 A5.3 5.3 0 0 1 8.13 12.53 M6.47 12.53 A5.3 5.3 0 0 1 2.07 8.13" stroke="#969696" stroke-width="3.3"/><path d="M2.07 6.47 A5.3 5.3 0 0 1 6.47 2.07 M8.13 2.07 A5.3 5.3 0 0 1 12.53 6.47 M12.53 8.13 A5.3 5.3 0 0 1 8.13 12.53 M6.47 12.53 A5.3 5.3 0 0 1 2.07 8.13" stroke="#fcfcfc" stroke-width="1.3"/><path d="M3 4.6 A5.2 5.2 0 0 1 6 2.4 M8.6 2.4 A5.2 5.2 0 0 1 11.6 4.6" stroke="#6a6a6a" stroke-width="1" opacity="0.7"/></g></svg>
<div class="t" style="left:52px;top:447px;">Rig Slot</div>
<div class="a" style="left:50px;top:172px;width:123px;height:17px;border:1px dotted #000"></div>
<div class="list" style="left:9px;top:728px;width:680px;height:86px"></div>
<div class="a" style="left:17px;top:732px;width:13px;height:13px;border:1px solid #22344E;background:linear-gradient(135deg,#DCDCD7,#FFFFFF)"></div>
<svg class="a" style="left:19px;top:734px" width="9" height="9" viewBox="0 0 9 9"><path d="M1 4 L3.5 6.5 L8 1.5" stroke="#22962A" stroke-width="2" fill="none"/></svg>
<div class="t" style="left:36px;top:733px;">Hammerhead II x5</div>
<div class="a" style="left:9px;top:817px;width:226px;height:14px;border:1px solid #C9C7BA;border-radius:3px;background:#E6E3D6"></div>
<div class="t" style="left:74px;top:818px;color:#fff;letter-spacing:0.1px">Active drones: 5 / 5</div>
<div class="t" style="left:297px;top:818px;letter-spacing:-0.15px">Boosters and Implants</div>
<div class="t" style="left:535px;top:818px;letter-spacing:0">Projected effects</div>
<div class="gb" style="left:697px;top:37px;width:248px;height:82px"></div>
<div class="cap" style="left:703px;top:31px">Ship Resources</div>
<div class="gb" style="left:697px;top:127px;width:248px;height:699px"></div>
<div class="cap" style="left:703px;top:121px">Ship Parameters</div>
<div class="a" style="left:760px;top:47px;width:1px;height:65px;background:#ACA899;box-shadow:1px 0 0 #fff"></div>
<svg class="a" style="left:700px;top:44px" width="28" height="24" viewBox="0 0 28 24"><g filter="url(#bl)"><ellipse cx="15" cy="20" rx="11" ry="3" fill="#d8d4c4"/><path d="M1.5 11 L13 5 L15 8 L3.5 14Z" fill="#3a3430"/><path d="M4 10.5 L13 6 L13.5 7 L4.5 11.5Z" fill="#e8e8e4"/><circle cx="3" cy="12.5" r="1.8" fill="#141210"/><path d="M14 4 L22 1.5 L27 4 L26 10 L22 14 L16 14 L13 9Z" fill="#4a3222"/><path d="M16 5 L21 3.5 L23 6 L18 8Z" fill="#8a6a50"/><path d="M10 16 L20 13 L24 17 L20 22 L12 22 L9 19Z" fill="#5a5048"/><circle cx="13.5" cy="17" r="1.5" fill="#f4f0ea"/><path d="M18 18 L23 17 L21 21Z" fill="#2a241e"/></g></svg>
<div class="t" style="left:732px;top:48px;letter-spacing:0;">: 0</div>
<svg class="a" style="left:702px;top:69px" width="28" height="18" viewBox="0 0 28 18"><g filter="url(#bl)"><path d="M0 12 L8 15 L26 14 L24 17 L6 17Z" fill="#8a8060"/><path d="M2 3 L7 1 L24 2 L26 8 L23 14 L7 14 L2 11Z" fill="#cfcfca"/><path d="M4 4 L10 3 L10 10 L4 11Z M12 4 L18 4 L18 10 L12 10Z" fill="#2e2e2e"/><path d="M6 5 L8 5 L8 9 L6 9Z M14 5 L16 5 L16 9 L14 9Z" fill="#9a9a96"/><path d="M19 4 L24 4 L25 9 L21 13 L19 11Z" fill="#4a4a48"/><path d="M21 6 L23 6 L22 10Z" fill="#e8e8e4"/></g></svg>
<div class="t" style="left:732px;top:72px;letter-spacing:0;">: 0</div>
<svg class="a" style="left:699px;top:90px" width="30" height="24" viewBox="0 0 30 24"><g filter="url(#bl)"><path d="M1 11 L5 10 L27 19 L26 22 L23 23 L1 14Z" fill="#5a5a60"/><path d="M3 12 L25 20 L24 21 L2 13Z" fill="#a8a8b0"/><circle cx="11" cy="5.5" r="4.3" fill="#2a2a2e"/><circle cx="11" cy="5.5" r="2.2" fill="#ecece4"/><path d="M15.5 5.5 L22 5 L27 7 L27 10 L22 11 L16 10Z" fill="#222a44"/><path d="M18 6.5 L21 6.5 L21 8.5 L18 8.5Z" fill="#8a9ac8"/><path d="M27 8 L30 8" stroke="#333" stroke-width="1.2"/></g></svg>
<div class="t" style="left:732px;top:96px;letter-spacing:0;">: 400</div>
<svg class="a" style="left:766px;top:42px" width="28" height="24" viewBox="0 0 28 24"><g filter="url(#bl)"><path d="M1 13 L12.5 1 L27 7 L19 22Z" fill="#14403e"/><path d="M3 12.5 L12.5 2.5 L25 7.5 L18.5 19.5Z" fill="#2e8a84"/><path d="M8 11 L13.5 5 L20 8 L16 15Z" fill="#48c4b0"/><path d="M11 10.5 L14 7.5 L17.5 9 L15 12.5Z" fill="#90f0dc"/><path d="M1 13 L19 22 L18 23.5 L1 15Z" fill="#1e2c2c"/><path d="M19 22 L27 7 L27.5 9 L19.5 23.5Z" fill="#405656"/><path d="M3 12.5 L12.5 2.5" stroke="#a0e8e0" stroke-width="0.8"/></g></svg>
<svg class="a" style="left:769px;top:66px" width="22" height="23" viewBox="0 0 22 23"><g filter="url(#bl)" fill="none"><ellipse cx="11" cy="12" rx="10" ry="3.4" transform="rotate(28 11 12)" stroke="#8a857a" stroke-width="1"/><ellipse cx="11" cy="12" rx="10" ry="3.4" transform="rotate(-35 11 12)" stroke="#948f84" stroke-width="1"/><ellipse cx="10" cy="11.5" rx="3" ry="10" transform="rotate(-10 10 11.5)" stroke="#7a756a" stroke-width="1"/><path d="M6 15 L9 17 M13 9 L16 7" stroke="#dcd8d0" stroke-width="1"/></g></svg>
<svg class="a" style="left:765px;top:91px" width="28" height="23" viewBox="0 0 28 23"><g filter="url(#bl)"><path d="M4 21 Q14 25 24 19" stroke="#e08070" stroke-width="1" fill="none"/><path d="M2 6 L8 2 L13 5 L11 10 L4 11Z" fill="#6a6e74"/><path d="M4 5 L9 3.5 L11 6.5 L6 8Z" fill="#f4f4f6"/><path d="M14 9 L21 6 L27 9 L24 14 L16 15Z" fill="#646870"/><path d="M16 9.5 L22 7.5 L24 10.5 L18 12Z" fill="#f0f0f4"/><path d="M5 12 L14 10 L17 16 L13 21 L6 20 L3 16Z" fill="#50545a"/><path d="M6 13 L13 11.5 L15 16 L9 18.5Z" fill="#e4e6ea"/><path d="M8 14 L11 14 L10 17Z" fill="#2a2c30"/><path d="M1 8 L4 8 M25 7 L28 6 M4 3 L6 1" stroke="#333" stroke-width="1"/></g></svg>
<div class="a" style="left:800px;top:43px;width:137px;height:10px;border:1px solid #505050;border-radius:3px;background:#F4FBF2"></div>
<div class="a" style="left:802px;top:45px;width:134px;height:5px;overflow:hidden;background:#D4F6D2;border-radius:1px"><div class="a" style="left:2px;top:0;width:6px;height:5px;background:linear-gradient(#9CE49C 0,#50C850 35%,#40C040 70%,#8CDC8C 100%)"></div><div class="a" style="left:10px;top:0;width:6px;height:5px;background:linear-gradient(#9CE49C 0,#50C850 35%,#40C040 70%,#8CDC8C 100%)"></div><div class="a" style="left:18px;top:0;width:6px;height:5px;background:linear-gradient(#9CE49C 0,#50C850 35%,#40C040 70%,#8CDC8C 100%)"></div><div class="a" style="left:26px;top:0;width:6px;height:5px;background:linear-gradient(#9CE49C 0,#50C850 35%,#40C040 70%,#8CDC8C 100%)"></div><div class="a" style="left:34px;top:0;width:6px;height:5px;background:linear-gradient(#9CE49C 0,#50C850 35%,#40C040 70%,#8CDC8C 100%)"></div><div class="a" style="left:42px;top:0;width:6px;height:5px;background:linear-gradient(#9CE49C 0,#50C850 35%,#40C040 70%,#8CDC8C 100%)"></div><div class="a" style="left:50px;top:0;width:6px;height:5px;background:linear-gradient(#9CE49C 0,#50C850 35%,#40C040 70%,#8CDC8C 100%)"></div><div class="a" style="left:58px;top:0;width:6px;height:5px;background:linear-gradient(#9CE49C 0,#50C850 35%,#40C040 70%,#8CDC8C 100%)"></div><div class="a" style="left:66px;top:0;width:6px;height:5px;background:linear-gradient(#9CE49C 0,#50C850 35%,#40C040 70%,#8CDC8C 100%)"></div><div class="a" style="left:74px;top:0;width:6px;height:5px;background:linear-gradient(#9CE49C 0,#50C850 35%,#40C040 70%,#8CDC8C 100%)"></div><div class="a" style="left:82px;top:0;width:6px;height:5px;background:linear-gradient(#9CE49C 0,#50C850 35%,#40C040 70%,#8CDC8C 100%)"></div><div class="a" style="left:90px;top:0;width:6px;height:5px;background:linear-gradient(#9CE49C 0,#50C850 35%,#40C040 70%,#8CDC8C 100%)"></div><div class="a" style="left:98px;top:0;width:6px;height:5px;background:linear-gradient(#9CE49C 0,#50C850 35%,#40C040 70%,#8CDC8C 100%)"></div><div class="a" style="left:106px;top:0;width:6px;height:5px;background:linear-gradient(#9CE49C 0,#50C850 35%,#40C040 70%,#8CDC8C 100%)"></div><div class="a" style="left:114px;top:0;width:6px;height:5px;background:linear-gradient(#9CE49C 0,#50C850 35%,#40C040 70%,#8CDC8C 100%)"></div><div class="a" style="left:122px;top:0;width:6px;height:5px;background:linear-gradient(#9CE49C 0,#50C850 35%,#40C040 70%,#8CDC8C 100%)"></div><div class="a" style="left:130px;top:0;width:6px;height:5px;background:linear-gradient(#9CE49C 0,#50C850 35%,#40C040 70%,#8CDC8C 100%)"></div></div>
<div class="t" style="left:800px;top:53px;letter-spacing:0;">467.25 / 468.75</div>
<div class="a" style="left:800px;top:67px;width:137px;height:10px;border:1px solid #505050;border-radius:3px;background:#F4FBF2"></div>
<div class="a" style="left:802px;top:69px;width:134px;height:5px;overflow:hidden;background:#D4F6D2;border-radius:1px"><div class="a" style="left:2px;top:0;width:6px;height:5px;background:linear-gradient(#9CE49C 0,#50C850 35%,#40C040 70%,#8CDC8C 100%)"></div><div class="a" style="left:10px;top:0;width:6px;height:5px;background:linear-gradient(#9CE49C 0,#50C850 35%,#40C040 70%,#8CDC8C 100%)"></div><div class="a" style="left:18px;top:0;width:6px;height:5px;background:linear-gradient(#9CE49C 0,#50C850 35%,#40C040 70%,#8CDC8C 100%)"></div><div class="a" style="left:26px;top:0;width:6px;height:5px;background:linear-gradient(#9CE49C 0,#50C850 35%,#40C040 70%,#8CDC8C 100%)"></div><div class="a" style="left:34px;top:0;width:6px;height:5px;background:linear-gradient(#9CE49C 0,#50C850 35%,#40C040 70%,#8CDC8C 100%)"></div><div class="a" style="left:42px;top:0;width:6px;height:5px;background:linear-gradient(#9CE49C 0,#50C850 35%,#40C040 70%,#8CDC8C 100%)"></div><div class="a" style="left:50px;top:0;width:6px;height:5px;background:linear-gradient(#9CE49C 0,#50C850 35%,#40C040 70%,#8CDC8C 100%)"></div><div class="a" style="left:58px;top:0;width:6px;height:5px;background:linear-gradient(#9CE49C 0,#50C850 35%,#40C040 70%,#8CDC8C 100%)"></div><div class="a" style="left:66px;top:0;width:6px;height:5px;background:linear-gradient(#9CE49C 0,#50C850 35%,#40C040 70%,#8CDC8C 100%)"></div><div class="a" style="left:74px;top:0;width:6px;height:5px;background:linear-gradient(#9CE49C 0,#50C850 35%,#40C040 70%,#8CDC8C 100%)"></div><div class="a" style="left:82px;top:0;width:6px;height:5px;background:linear-gradient(#9CE49C 0,#50C850 35%,#40C040 70%,#8CDC8C 100%)"></div><div class="a" style="left:90px;top:0;width:6px;height:5px;background:linear-gradient(#9CE49C 0,#50C850 35%,#40C040 70%,#8CDC8C 100%)"></div><div class="a" style="left:98px;top:0;width:6px;height:5px;background:linear-gradient(#9CE49C 0,#50C850 35%,#40C040 70%,#8CDC8C 100%)"></div><div class="a" style="left:106px;top:0;width:6px;height:5px;background:linear-gradient(#9CE49C 0,#50C850 35%,#40C040 70%,#8CDC8C 100%)"></div><div class="a" style="left:114px;top:0;width:6px;height:5px;background:linear-gradient(#9CE49C 0,#50C850 35%,#40C040 70%,#8CDC8C 100%)"></div><div class="a" style="left:122px;top:0;width:6px;height:5px;background:linear-gradient(#9CE49C 0,#50C850 35%,#40C040 70%,#8CDC8C 100%)"></div><div class="a" style="left:130px;top:0;width:6px;height:5px;background:linear-gradient(#9CE49C 0,#50C850 35%,#40C040 70%,#8CDC8C 100%)"></div></div>
<div class="t" style="left:800px;top:77px;letter-spacing:0;">1801.3 / 1875</div>
<div class="a" style="left:800px;top:91px;width:137px;height:10px;border:1px solid #505050;border-radius:3px;background:#F4FBF2"></div>
<div class="a" style="left:802px;top:93px;width:134px;height:5px;overflow:hidden;background:#D4F6D2;border-radius:1px"><div class="a" style="left:2px;top:0;width:6px;height:5px;background:linear-gradient(#9CE49C 0,#50C850 35%,#40C040 70%,#8CDC8C 100%)"></div><div class="a" style="left:10px;top:0;width:6px;height:5px;background:linear-gradient(#9CE49C 0,#50C850 35%,#40C040 70%,#8CDC8C 100%)"></div><div class="a" style="left:18px;top:0;width:6px;height:5px;background:linear-gradient(#9CE49C 0,#50C850 35%,#40C040 70%,#8CDC8C 100%)"></div><div class="a" style="left:26px;top:0;width:6px;height:5px;background:linear-gradient(#9CE49C 0,#50C850 35%,#40C040 70%,#8CDC8C 100%)"></div><div class="a" style="left:34px;top:0;width:6px;height:5px;background:linear-gradient(#9CE49C 0,#50C850 35%,#40C040 70%,#8CDC8C 100%)"></div><div class="a" style="left:42px;top:0;width:6px;height:5px;background:linear-gradient(#9CE49C 0,#50C850 35%,#40C040 70%,#8CDC8C 100%)"></div><div class="a" style="left:50px;top:0;width:6px;height:5px;background:linear-gradient(#9CE49C 0,#50C850 35%,#40C040 70%,#8CDC8C 100%)"></div><div class="a" style="left:58px;top:0;width:6px;height:5px;background:linear-gradient(#9CE49C 0,#50C850 35%,#40C040 70%,#8CDC8C 100%)"></div><div class="a" style="left:66px;top:0;width:6px;height:5px;background:linear-gradient(#9CE49C 0,#50C850 35%,#40C040 70%,#8CDC8C 100%)"></div><div class="a" style="left:74px;top:0;width:6px;height:5px;background:linear-gradient(#9CE49C 0,#50C850 35%,#40C040 70%,#8CDC8C 100%)"></div><div class="a" style="left:82px;top:0;width:6px;height:5px;background:linear-gradient(#9CE49C 0,#50C850 35%,#40C040 70%,#8CDC8C 100%)"></div><div class="a" style="left:90px;top:0;width:6px;height:5px;background:linear-gradient(#9CE49C 0,#50C850 35%,#40C040 70%,#8CDC8C 100%)"></div><div class="a" style="left:98px;top:0;width:6px;height:5px;background:linear-gradient(#9CE49C 0,#50C850 35%,#40C040 70%,#8CDC8C 100%)"></div><div class="a" style="left:106px;top:0;width:6px;height:5px;background:linear-gradient(#9CE49C 0,#50C850 35%,#40C040 70%,#8CDC8C 100%)"></div><div class="a" style="left:114px;top:0;width:6px;height:5px;background:linear-gradient(#9CE49C 0,#50C850 35%,#40C040 70%,#8CDC8C 100%)"></div><div class="a" style="left:122px;top:0;width:6px;height:5px;background:linear-gradient(#9CE49C 0,#50C850 35%,#40C040 70%,#8CDC8C 100%)"></div><div class="a" style="left:130px;top:0;width:6px;height:5px;background:linear-gradient(#9CE49C 0,#50C850 35%,#40C040 70%,#8CDC8C 100%)"></div></div>
<div class="t" style="left:800px;top:101px;letter-spacing:0;">50 / 50</div>
<div class="gb" style="left:705px;top:139px;width:231px;height:60px"></div>
<div class="cap" style="left:712px;top:134px">Hitpoints (Effective HP: 30,461)</div>
<svg class="a" style="left:710px;top:145px" width="26" height="26" viewBox="0 0 26 26"><defs><radialGradient id="sg" cx="50%" cy="50%" r="50%"><stop offset="0" stop-color="#f0ffff"/><stop offset="0.45" stop-color="#90e0f0"/><stop offset="1" stop-color="#c8eef4" stop-opacity="0"/></radialGradient><linearGradient id="sb" x1="0" y1="0" x2="0" y2="1"><stop offset="0" stop-color="#e0f8fc" stop-opacity="0.2"/><stop offset="1" stop-color="#a8f0ff"/></linearGradient></defs><g filter="url(#bl)"><ellipse cx="13" cy="8" rx="9" ry="8" fill="url(#sg)"/><rect x="8" y="6" width="10" height="14" fill="url(#sb)"/><ellipse cx="13" cy="20.5" rx="11.5" ry="4.5" fill="#3a3c40"/><ellipse cx="13" cy="19.5" rx="9" ry="3" fill="#9aa0a4"/><ellipse cx="13" cy="19.3" rx="5" ry="1.8" fill="#c8f8ff"/><ellipse cx="13" cy="22.5" rx="9" ry="1.5" fill="#1e2024"/></g></svg>
<div class="t" style="left:739px;top:151px;letter-spacing:0;">: 4395</div>
<svg class="a" style="left:784px;top:146px" width="30" height="26" viewBox="0 0 30 26"><g filter="url(#bl)"><path d="M6 18 L18 14 L26 16 L17 24 L8 22Z" fill="#5a5a58" opacity="0.85"/><path d="M3.5 10 Q5 3.5 12 3 L19 4 Q23 5 24 9 L27 11 L26.5 13.5 L23 12.5 Q20 12 19 14 L17.5 21 L10 20 L4 14Z" fill="#7c7e82"/><path d="M5 9.5 Q7 4.5 12 4.2 L18.5 5 Q21.5 6 22 9 L18 11.5 L17 19 L10.5 18.5 L5.5 13Z" fill="#b4b6ba"/><path d="M7 7.5 Q9 5.5 13 5.5 L19 6.5 M6.5 11 L17.5 12 M8 14.5 L17 15.5" stroke="#e8eaec" stroke-width="1.1" fill="none"/><path d="M6 9 L18 10 M7 13 L17 13.8" stroke="#6a6c70" stroke-width="0.8" fill="none"/><path d="M22 10 L26.5 12 L25 14 L22 12.5Z" fill="#2a2c2e"/><path d="M17.5 12 L18.5 13 L17.5 21 L16.5 20Z" fill="#3a3c3e"/></g></svg>
<div class="t" style="left:814px;top:151px;letter-spacing:0;">: 6836</div>
<svg class="a" style="left:864px;top:148px" width="22" height="22" viewBox="0 0 22 22"><g filter="url(#bl)" fill="none" stroke-linejoin="round"><path d="M11 1.5 L20 6 L20 16 L11 20.5 L2 16 L2 6Z" stroke="#3a3028" stroke-width="2.2"/><path d="M11 1.5 L11 11 L20 16 M11 11 L2 16" stroke="#4a3e32" stroke-width="1.6"/><path d="M2 6 L11 11 L20 6" stroke="#d8ccb8" stroke-width="1"/><path d="M4 7 L10 10 L10 17 L4 14Z" fill="#c8bca8" stroke="none"/><path d="M12 10 L18 7 L18 14 L12 17Z" fill="#a89c88" stroke="none"/></g></svg>
<div class="t" style="left:891px;top:151px;letter-spacing:0;">: 5860</div>
<svg class="a" style="left:710px;top:175px" width="16" height="16" viewBox="0 0 16 16"><defs><radialGradient id="em" cx="45%" cy="40%" r="60%"><stop offset="0" stop-color="#6ad0e0"/><stop offset="1" stop-color="#14707a"/></radialGradient></defs><g filter="url(#bl)"><circle cx="8" cy="8" r="7" fill="url(#em)"/><path d="M2 6 L8 8 L7 4 L13 10 L8 8.5 L9.5 13 Z" fill="#eaffff"/></g></svg>
<div class="a" style="left:726px;top:173px;width:1px;height:23px;background:#9A9A94"></div><div class="a" style="left:727px;top:173px;width:2px;height:23px;background:#F6F5F0"></div><div class="a" style="left:729px;top:180px;width:1px;height:14px;background:#B4B2AA"></div>
<div class="t" style="left:733px;top:171px;letter-spacing:0;">0%</div>
<div class="t" style="left:733px;top:183px;letter-spacing:0;">68.8%</div>
<svg class="a" style="left:764px;top:175px" width="17" height="16" viewBox="0 0 17 16"><g filter="url(#bl)"><path d="M2 5 Q7 2 11 4 Q13 1 16 3 L15 12 Q11 14 8 12 Q4 14 1 12 L3 10 L1 8Z" fill="#d83020"/><path d="M3 6 Q8 4 14 5 M2 9 Q8 7 14 8.5 M3 11.5 Q8 10 14 11" stroke="#ff9a80" stroke-width="1.1" fill="none"/></g></svg>
<div class="a" style="left:783px;top:173px;width:1px;height:23px;background:#9A9A94"></div><div class="a" style="left:784px;top:173px;width:2px;height:23px;background:#F6F5F0"></div><div class="a" style="left:786px;top:180px;width:1px;height:14px;background:#B4B2AA"></div>
<div class="t" style="left:789px;top:171px;letter-spacing:0;">20%</div>
<div class="t" style="left:789px;top:183px;letter-spacing:0;">59.4%</div>
<svg class="a" style="left:822px;top:176px" width="16" height="14" viewBox="0 0 16 14"><g filter="url(#bl)"><path d="M1 9 L6 7 L14 2 L15 7 L13 12 L8 11Z" fill="#8a8a8a"/><path d="M3 8.5 L9 6 L14 4 L13 8 L9 9Z" fill="#f4f4f4"/><path d="M6 11 L13 10 L12 12Z" fill="#505050"/></g></svg>
<div class="a" style="left:839px;top:173px;width:1px;height:23px;background:#9A9A94"></div><div class="a" style="left:840px;top:173px;width:2px;height:23px;background:#F6F5F0"></div><div class="a" style="left:842px;top:180px;width:1px;height:14px;background:#B4B2AA"></div>
<div class="t" style="left:845px;top:171px;letter-spacing:0;">40%</div>
<div class="t" style="left:845px;top:183px;letter-spacing:0;">53.1%</div>
<svg class="a" style="left:879px;top:175px" width="16" height="18" viewBox="0 0 16 18"><defs><radialGradient id="ex" cx="50%" cy="50%" r="50%"><stop offset="0" stop-color="#fffce8"/><stop offset="0.35" stop-color="#ffb850"/><stop offset="1" stop-color="#8a3810"/></radialGradient></defs><g filter="url(#bl)"><rect x="1" y="1" width="14" height="16" fill="#3a2418"/><rect x="2" y="3" width="12" height="12" fill="url(#ex)"/></g></svg>
<div class="a" style="left:895px;top:173px;width:1px;height:23px;background:#9A9A94"></div><div class="a" style="left:896px;top:173px;width:2px;height:23px;background:#F6F5F0"></div><div class="a" style="left:898px;top:180px;width:1px;height:14px;background:#B4B2AA"></div>
<div class="t" style="left:901px;top:171px;letter-spacing:0;">50%</div>
<div class="t" style="left:901px;top:183px;letter-spacing:0;">50%</div>
<div class="gb" style="left:705px;top:208px;width:72px;height:34px"></div>
<div class="cap" style="left:712px;top:202px">Defence</div>
<svg class="a" style="left:711px;top:215px" width="24" height="24" viewBox="0 0 24 24"><g filter="url(#bl)"><path d="M5 4 Q9 0 15 2 L17 6 L12 9 L16 13 L14 19 Q10 23 6 21 L4 17 L9 13 L4 9Z" fill="#5a4630"/><path d="M6 4.5 Q10 1.5 14 3 L14.5 5.5 L9.5 8.5 L13.5 12.5 L12 17 Q9 20 7 19 L6 17 L10.5 12.5 L6 8.5Z" fill="#d8c4a0"/><path d="M8 5 L12 3.5 L11 7Z M8 17 L11 13.5 L10 18Z" fill="#fff8e8"/><path d="M16 6 L22 3" stroke="#70d8f0" stroke-width="1"/></g></svg>
<div class="t" style="left:737px;top:214px;letter-spacing:0;">: 103</div>
<div class="t" style="left:737px;top:226px;letter-spacing:0;">: 103</div>
<div class="gb" style="left:784px;top:208px;width:152px;height:34px"></div>
<div class="cap" style="left:791px;top:202px">Capacitor (Lasts: 40m 46s)</div>
<svg class="a" style="left:790px;top:215px" width="20" height="23" viewBox="0 0 20 23"><g filter="url(#bl)" transform="rotate(28 10 11.5)"><rect x="4" y="1" width="10" height="20" rx="4" fill="#4a3a28"/><rect x="5" y="2" width="8" height="18" rx="3" fill="#b09a78"/><rect x="8.5" y="4" width="3" height="15" fill="#3a2a1a"/><rect x="5.5" y="4" width="2" height="14" fill="#f0e4d0"/><ellipse cx="9" cy="3.5" rx="4" ry="2.2" fill="#f4f0ea"/></g></svg>
<div class="t" style="left:815px;top:218px;letter-spacing:0;">: 3242</div>
<svg class="a" style="left:868px;top:215px" width="25" height="22" viewBox="0 0 25 22"><g filter="url(#bl)" transform="rotate(25 12.5 11)"><rect x="1" y="4" width="22" height="13" rx="6" fill="#2e2c2a"/><rect x="2" y="5" width="19" height="10" rx="5" fill="#9a968e"/><rect x="4" y="6" width="14" height="3" rx="1.5" fill="#e8e6e0"/><rect x="17" y="5" width="5" height="11" rx="2" fill="#4a4846"/></g></svg>
<div class="t" style="left:897px;top:214px;letter-spacing:0;">- 29.8</div>
<div class="t" style="left:897px;top:226px;letter-spacing:0;">+29.6</div>
<div class="gb" style="left:705px;top:251px;width:72px;height:58px"></div>
<div class="cap" style="left:712px;top:246px">Firepower</div>
<svg class="a" style="left:708px;top:256px" width="30" height="24" viewBox="0 0 30 24"><g filter="url(#bl)"><path d="M1 9 L13 3 L17 4 L18 7 L5 13 L2 12Z" fill="#4a4c54"/><path d="M3 9.5 L13 4.5 L15 5.5 L4 11Z" fill="#e4e6ea"/><path d="M14 2 L21 1 L23 4 L20 9 L15 8Z" fill="#5a5e68"/><path d="M9 13 L20 9 L23 13 L21 21 L13 23 L9 19Z" fill="#3a3c44"/><path d="M11 14 L18 12 L19 15 L12 18Z" fill="#c8ccd8"/><path d="M21 12 L29 14 L22 20Z" fill="#c8c6c0" opacity="0.7"/></g></svg>
<div class="t" style="left:737px;top:261px;letter-spacing:0;">: 623</div>
<svg class="a" style="left:712px;top:284px" width="24" height="20" viewBox="0 0 24 20"><defs><linearGradient id="vs" x1="0" y1="0" x2="1" y2="0"><stop offset="0" stop-color="#fff" stop-opacity="0"/><stop offset="0.5" stop-color="#888"/><stop offset="1" stop-color="#111"/></linearGradient></defs><g filter="url(#bl)"><rect x="3" y="2" width="16" height="2.6" fill="url(#vs)"/><rect x="1" y="8" width="20" height="2.8" fill="url(#vs)"/><rect x="6" y="11.5" width="16" height="2.6" fill="url(#vs)"/><rect x="2" y="16" width="13" height="2.6" fill="url(#vs)"/></g></svg>
<div class="t" style="left:737px;top:285px;letter-spacing:0;">: 1429</div>
<div class="gb" style="left:784px;top:251px;width:152px;height:58px"></div>
<div class="cap" style="left:791px;top:246px">Targeting</div>
<svg class="a" style="left:787px;top:257px" width="24" height="24" viewBox="0 0 24 24"><g filter="url(#bl)"><circle cx="12" cy="12" r="10.5" fill="#a8aca8"/><circle cx="12" cy="12" r="9.5" fill="#dfe8ea"/><circle cx="11" cy="11" r="6" fill="#eef4f6"/><path d="M11 13 L19 4" stroke="#2a3a44" stroke-width="1.6"/><path d="M3 16 Q12 24 21 16" stroke="#f8f8f8" stroke-width="1.6" fill="none"/></g></svg>
<div class="t" style="left:815px;top:261px;letter-spacing:0;">: 62.5 km</div>
<svg class="a" style="left:876px;top:258px" width="25" height="24" viewBox="0 0 25 24"><defs><radialGradient id="mt" cx="45%" cy="40%" r="60%"><stop offset="0" stop-color="#e8e0d0"/><stop offset="1" stop-color="#8a7e6c"/></radialGradient></defs><g filter="url(#bl)"><circle cx="12.5" cy="12.5" r="10" fill="url(#mt)"/><circle cx="12.5" cy="12.5" r="6" fill="none" stroke="#6a5e50" stroke-width="1"/><path d="M12.5 1 V24 M1 12.5 H24" stroke="#6a5e50" stroke-width="1"/><circle cx="12.5" cy="12.5" r="10" fill="none" stroke="#5a4e40" stroke-width="1"/></g></svg>
<div class="t" style="left:903px;top:261px;letter-spacing:0;">: 6</div>
<svg class="a" style="left:787px;top:282px" width="24" height="22" viewBox="0 0 24 22"><g filter="url(#bl)"><path d="M12 11 L3 3 M12 11 L1 12 M12 11 L3 20 M12 11 L9 21 M12 11 L17 20 M12 11 L21 5 M12 11 L22 14 M12 11 L14 1" stroke="#4a3a28" stroke-width="1.3"/><ellipse cx="12.5" cy="11.5" rx="5.5" ry="4.5" fill="#9a8468"/><ellipse cx="13.5" cy="10.5" rx="3" ry="2" fill="#f0e4d0"/></g></svg>
<div class="t" style="left:815px;top:285px;letter-spacing:0;">: 157.5 mm</div>
<svg class="a" style="left:877px;top:282px" width="23" height="22" viewBox="0 0 23 22"><g filter="url(#bl)"><circle cx="11.5" cy="11" r="10.5" fill="#f0f0ec"/><circle cx="11.5" cy="11" r="9.5" fill="none" stroke="#6a6a66" stroke-width="1.4"/><circle cx="11.5" cy="11" r="6" fill="none" stroke="#4a5058" stroke-width="2"/><circle cx="11.5" cy="11" r="2.5" fill="none" stroke="#3a4048" stroke-width="1.5"/></g></svg>
<div class="t" style="left:903px;top:285px;letter-spacing:0;">: 16</div>
<div class="gb" style="left:705px;top:317px;width:231px;height:34px"></div>
<div class="cap" style="left:712px;top:312px">Mobility</div>
<svg class="a" style="left:710px;top:326px" width="23" height="19" viewBox="0 0 23 19"><g filter="url(#bl)" transform="rotate(30 11.5 9.5)"><rect x="2" y="4" width="18" height="11" rx="4" fill="#6a6a66"/><rect x="3" y="5" width="12" height="8" rx="3" fill="#f4f2ee"/><ellipse cx="17" cy="9.5" rx="4.5" ry="5.5" fill="#58d8e8"/><ellipse cx="17" cy="9.5" rx="2.5" ry="3" fill="#c8f8ff"/></g></svg>
<div class="t" style="left:735px;top:328px;letter-spacing:0;">: 47 m/s</div>
<svg class="a" style="left:789px;top:321px" width="28" height="26" viewBox="0 0 28 26"><g filter="url(#bl)"><path d="M4 25 L9 15 L19 15 L27 23 L22 25Z" fill="#5a8cc8"/><path d="M6 25 L10 16 M10 25 L13 16 M14 25 L16 16 M18 25 L19 16" stroke="#e4f0fc" stroke-width="1.1"/><circle cx="13" cy="10" r="7" fill="#3a6aa8"/><circle cx="13" cy="10" r="5" fill="#8ab8e8"/><path d="M13 10 V6" stroke="#102040" stroke-width="1.4"/><path d="M11 1.5 H15 M13 1.5 V3" stroke="#4a5a70" stroke-width="1.5"/></g></svg>
<div class="t" style="left:818px;top:328px;letter-spacing:0;">: 8 s</div>
<svg class="a" style="left:858px;top:324px" width="21" height="22" viewBox="0 0 21 22"><g filter="url(#bl)"><circle cx="8" cy="8" r="6.5" fill="none" stroke="#58c8d8" stroke-width="3"/><path d="M7 7 L16 5 L20 11 L18 19 L10 21 L6 15Z" fill="#6a5848"/><circle cx="13" cy="13" r="4.5" fill="#e0d4c4"/><circle cx="13" cy="13" r="2" fill="#5a4a3a"/></g></svg>
<div class="t" style="left:879px;top:328px;letter-spacing:0;">: 3 au/s</div>
<div class="t" style="left:704px;top:362px;">Signature: 265 m2</div>
<div class="t" style="left:824px;top:362px;">Cargohold: 350 m3</div>
<div class="t" style="left:704px;top:378px;">Dronebay: 50 / 50 m3</div>
<div class="t" style="left:704px;top:394px;">Price: 0 isk</div>
<div class="t" style="left:704px;top:410px;">Fleet Commander - right click to set</div>
<div class="t" style="left:704px;top:426px;">Wing Commander - right click to set</div>
<div class="t" style="left:704px;top:442px;">Squad Commander - right click to set</div>
</div></body></html>
